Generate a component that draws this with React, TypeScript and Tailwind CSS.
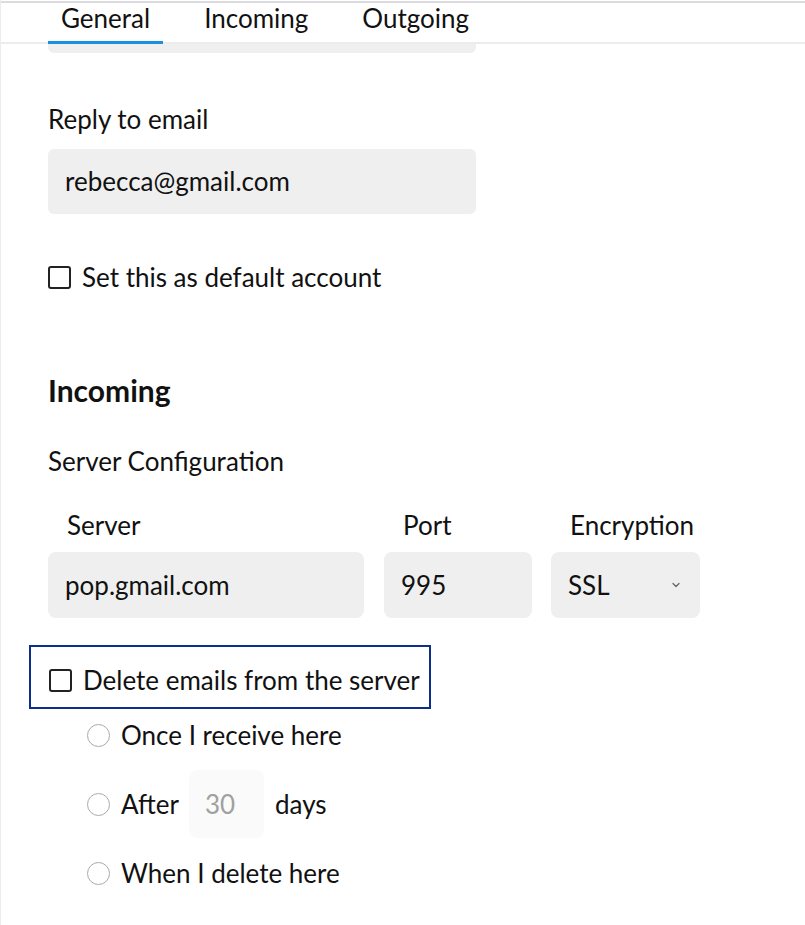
import { ChevronDown } from "lucide-react";

function Checkbox() {
  return <span className="w-[23px] h-[23px] shrink-0 rounded-[3px] border-2 border-[#222] bg-white" />;
}

function Radio() {
  return <span className="w-[23px] h-[23px] shrink-0 rounded-full border-[1.5px] border-[#aaa] bg-white" />;
}

const tabs = ["General", "Incoming", "Outgoing"];

export default function App() {
  return (
    <div
      className="w-[805px] h-[925px] bg-white text-[#111] border-l border-[#ececec] overflow-hidden"
      style={{ fontFamily: "Lato, 'Noto Sans', sans-serif" }}
    >
      <div className="h-[2px] mt-px bg-[#dcdce0]" />

      {/* tab bar */}
      <div className="flex pl-[47px] gap-[28px] h-[41px] border-b-2 border-[#ececec]">
        {tabs.map((t, i) => (
          <div
            key={t}
            className={
              "px-[13px] text-[26px] leading-[30px] -mb-[2px] " +
              (i === 0 ? "border-b-[3px] border-[#1a8fe0]" : "")
            }
          >
            {t}
          </div>
        ))}
      </div>

      <div className="pl-[47px]">
        <div className="w-[428px] h-[9px] bg-[#efefef] rounded-b-[6px]" />

        <div className="mt-[51px] text-[26px] leading-[30px]">Reply to email</div>
        <div className="mt-[15px] w-[428px] h-[65px] rounded-[6px] bg-[#efefef] flex items-center px-[17px] text-[26px]">
          rebecca@gmail.com
        </div>

        <label className="mt-[48px] flex items-center gap-[11px] h-[30px] text-[26px]">
          <Checkbox />
          Set this as default account
        </label>

        <div className="mt-[81px] text-[30px] leading-[34px] font-bold">Incoming</div>
        <div className="mt-[39px] text-[26px] leading-[30px]">Server Configuration</div>

        <div className="mt-[34px] flex gap-[20px] text-[26px]">
          <div className="w-[316px]">
            <div className="pl-[19px] leading-[30px]">Server</div>
            <div className="mt-[12px] h-[66px] rounded-[8px] bg-[#efefef] flex items-center px-[17px]">
              pop.gmail.com
            </div>
          </div>
          <div className="w-[148px]">
            <div className="pl-[19px] leading-[30px]">Port</div>
            <div className="mt-[12px] h-[66px] rounded-[8px] bg-[#efefef] flex items-center px-[17px]">995</div>
          </div>
          <div className="w-[149px] -ml-px">
            <div className="pl-[19px] leading-[30px]">Encryption</div>
            <div className="mt-[12px] h-[66px] rounded-[8px] bg-[#efefef] flex items-center justify-between pl-[17px] pr-[18px]">
              SSL
              <ChevronDown size={12} strokeWidth={2.5} className="text-[#666]" />
            </div>
          </div>
        </div>

        {/* highlighted option */}
        <div className="mt-[27px] -ml-[19px] w-[402px] h-[64px] border-2 border-[#0d2f87] flex items-center pl-[18px] pt-[6px] gap-[11px] text-[26px]">
          <Checkbox />
          Delete emails from the server
        </div>

        <div className="pl-[39px] text-[26px]">
          <label className="mt-[11px] flex items-center gap-[11px] h-[30px]">
            <Radio />
            Once I receive here
          </label>
          <label className="mt-[20px] flex items-center gap-[11px] h-[68px]">
            <Radio />
            After
            <span className="-ml-px w-[75px] h-[68px] rounded-[8px] bg-[#fafafa] flex items-center px-[16px] text-[#a0a0a0]">
              30
            </span>
            days
          </label>
          <label className="mt-[20px] flex items-center gap-[11px] h-[30px]">
            <Radio />
            When I delete here
          </label>
        </div>
      </div>
    </div>
  );
}
